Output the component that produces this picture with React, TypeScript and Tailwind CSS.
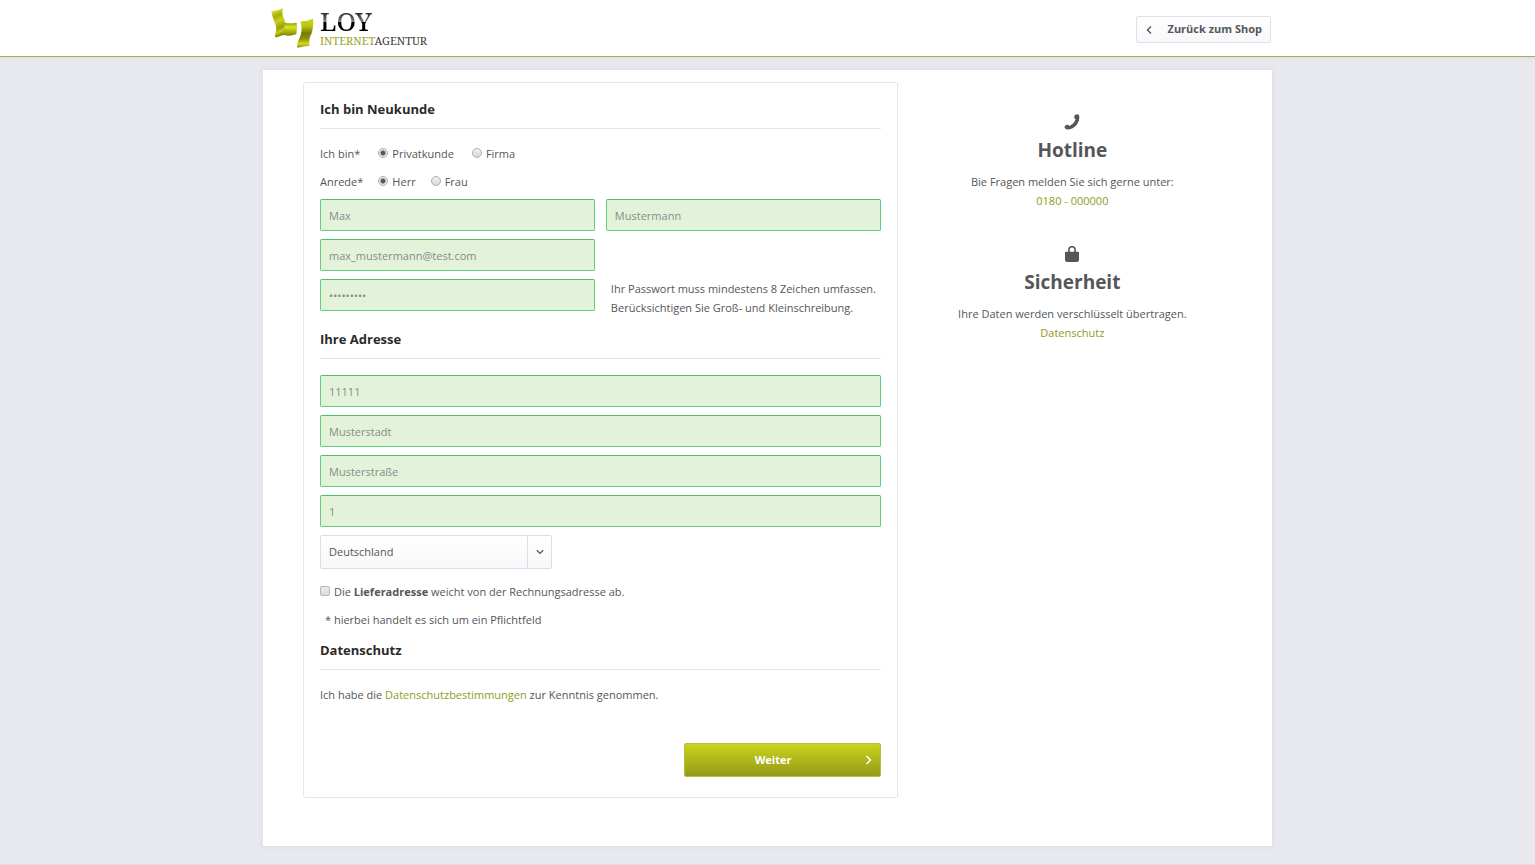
import React, { useState } from "react";

const addressFields = [
    { id: "zip", label: "PLZ", value: "11111" },
    { id: "city", label: "Ort", value: "Musterstadt" },
    { id: "street", label: "Straße", value: "Musterstraße" },
    { id: "number", label: "Hausnummer", value: "1" },
];

function Logo() {
    return (
        <a href="#" className="flex items-start gap-1">
            <svg viewBox="48 20 135 128" className="h-[42px] w-[45px] shrink-0" aria-hidden="true">
                <defs>
                    <linearGradient id="ribbon" x1="0" y1="0" x2="0.25" y2="1">
                        <stop offset="0" stopColor="#7f8500" />
                        <stop offset="0.14" stopColor="#d3de1c" />
                        <stop offset="0.32" stopColor="#a6ac08" />
                        <stop offset="0.5" stopColor="#c9d316" />
                        <stop offset="0.75" stopColor="#9ca204" />
                        <stop offset="0.88" stopColor="#c6cf1d" />
                        <stop offset="1" stopColor="#7e8400" />
                    </linearGradient>
                    <linearGradient id="fold" x1="0" y1="0" x2="0" y2="1">
                        <stop offset="0" stopColor="#8d9300" />
                        <stop offset="0.35" stopColor="#dbe62a" />
                        <stop offset="0.75" stopColor="#a2a908" />
                        <stop offset="1" stopColor="#7e8400" />
                    </linearGradient>
                    <linearGradient id="tail" x1="0" y1="0" x2="0" y2="1">
                        <stop offset="0" stopColor="#c9d420" />
                        <stop offset="0.25" stopColor="#bcc60f" />
                        <stop offset="0.5" stopColor="#767b00" />
                        <stop offset="0.7" stopColor="#8f9500" />
                        <stop offset="0.87" stopColor="#d3de25" />
                        <stop offset="1" stopColor="#7a8000" />
                    </linearGradient>
                </defs>
                <path d="M48 34Q66 32 84 24Q78 36 83 48Q90 58 89 70L97 105Q80 104 63 113Q55 110 61 98Q66 82 57 64Q50 48 48 34Z" fill="url(#ribbon)" />
                <path d="M87 67Q106 72 125 68Q128 85 124 103Q109 109 92 107L78 99Q91 90 87 67Z" fill="url(#fold)" />
                <path d="M137 64Q158 64 175 56Q178 75 171 99Q161 116 164 138Q145 139 128 144Q124 134 131 121Q139 106 140 92Q141 76 137 64Z" fill="url(#tail)" />
            </svg>
            <span className="flex flex-col font-['Noto_Serif','Liberation_Serif',serif]">
                <span className="bg-linear-to-b from-[#333] from-25% via-[#8a8a8a] via-54% to-black to-55% bg-clip-text text-[26px] leading-7 font-medium text-transparent">
                    LOY
                </span>
                <span className="text-[11px] leading-3 text-[#3a3a3a]">
                    <span className="text-[#9ba41c]">INTERNET</span>AGENTUR
                </span>
            </span>
        </a>
    );
}

function SectionTitle({ children }: { children: React.ReactNode }) {
    return (
        <h2 className="border-b border-[#e4e4ee] pb-[9px] text-[13px] leading-5 font-bold text-[#2b2b2b]">
            {children}
        </h2>
    );
}

function Field({ id, label, value, type = "text" }: { id: string; label: string; value: string; type?: string }) {
    return (
        <div>
            <input
                id={id}
                type={type}
                aria-label={label}
                defaultValue={value}
                className="block h-8 w-full rounded-xs border border-[#62cb80] border-t-[#50be70] bg-[#e2f3da] px-2 leading-5 text-[#8a8a8a] outline-none"
            />
        </div>
    );
}

function Radio({ name, label, checked, onChange }: { name: string; label: string; checked: boolean; onChange: () => void }) {
    return (
        <label className="flex items-center gap-1">
            <input
                type="radio"
                name={name}
                checked={checked}
                onChange={onChange}
                className="mb-[2px] size-[10px] appearance-none rounded-full border border-[#b0b0b0] bg-linear-to-b from-[#f2f2f2] to-[#d8d8d8] checked:bg-[radial-gradient(circle,#585858_0_2px,#e6e6e6_3px)]"
            />
            {label}
        </label>
    );
}

function InfoBlock({ icon, title, text, link }: { icon: React.ReactNode; title: string; text: string; link: string }) {
    return (
        <div className="flex flex-col items-center text-center">
            {icon}
            <h3 className="mt-[6px] text-[19px] leading-7 font-bold">{title}</h3>
            <p className="mt-2 leading-[19px]">
                {text}
                <br />
                <a href="#" className="text-[#8f9c20]">{link}</a>
            </p>
        </div>
    );
}

function App() {
    const [customerType, setCustomerType] = useState("Privatkunde");
    const [salutation, setSalutation] = useState("Herr");

    return (
        <div className="min-h-screen border-b border-[#dedee4] bg-[#e8e9ee] font-['Open_Sans',sans-serif] text-[11px] text-[#55555a]">
            <header className="border-b border-[#aab04a] bg-white shadow-xs">
                <div className="mx-auto flex h-14 max-w-[1009px] items-center justify-between pr-px pl-2">
                    <Logo />
                    <a
                        href="#"
                        className="mt-[2px] flex h-[27px] items-center gap-[15px] rounded-xs border border-[#e0e0ec] bg-linear-to-b from-white to-[#f8f8fa] px-2 pt-px font-bold"
                    >
                        <svg viewBox="0 0 8 10" className="h-[10px] w-2" fill="none" stroke="currentColor" strokeWidth="1.4" aria-hidden="true">
                            <path d="M6 1.5L2.5 5L6 8.5" />
                        </svg>
                        Zurück zum Shop
                    </a>
                </div>
            </header>

            <main className="mx-auto mt-[13px] flex max-w-[1009px] items-start bg-white pt-3 pr-[25px] pb-12 pl-10 shadow-[0_0_4px_1px_#dcdce8]">
                <form
                    onSubmit={(e) => e.preventDefault()}
                    className="w-[63%] rounded-xs border border-[#e6e6ee] px-4 pt-4 pb-5"
                >
                    <SectionTitle>Ich bin Neukunde</SectionTitle>
                    <div className="mt-[11px] flex h-7 items-center gap-[18px]">
                        <span>Ich bin*</span>
                        {["Privatkunde", "Firma"].map((type) => (
                            <Radio
                                key={type}
                                name="customerType"
                                label={type}
                                checked={customerType === type}
                                onChange={() => setCustomerType(type)}
                            />
                        ))}
                    </div>
                    <div className="flex h-7 items-center gap-[15px]">
                        <span>Anrede*</span>
                        {["Herr", "Frau"].map((item) => (
                            <Radio
                                key={item}
                                name="salutation"
                                label={item}
                                checked={salutation === item}
                                onChange={() => setSalutation(item)}
                            />
                        ))}
                    </div>
                    <div className="mt-[3px] mb-3 grid grid-cols-2 gap-x-[11px] gap-y-2">
                        <Field id="firstname" label="Vorname" value="Max" />
                        <Field id="lastname" label="Nachname" value="Mustermann" />
                        <Field id="email" label="E-Mail" type="email" value="max_mustermann@test.com" />
                        <span />
                        <Field id="password" label="Passwort" type="password" value="passwort1" />
                        <p className="pl-[5px] leading-[19px] whitespace-nowrap">
                            Ihr Passwort muss mindestens 8 Zeichen umfassen.
                            <br />
                            Berücksichtigen Sie Groß- und Kleinschreibung.
                        </p>
                    </div>

                    <SectionTitle>Ihre Adresse</SectionTitle>
                    <div className="mt-4 flex flex-col gap-2">
                        {addressFields.map((field) => (
                            <Field key={field.id} {...field} />
                        ))}
                        <div className="relative w-[232px]">
                            <select
                                id="country"
                                aria-label="Land"
                                className="block h-[34px] w-full appearance-none rounded-xs border border-[#dedeea] bg-linear-to-b from-white to-[#f8f8fa] px-2 leading-5"
                            >
                                <option>Deutschland</option>
                            </select>
                            <span className="pointer-events-none absolute inset-y-0 right-0 flex w-[25px] items-center justify-center border-l border-[#dedeea]">
                                <svg viewBox="0 0 8 6" className="h-[6px] w-2" fill="none" stroke="currentColor" strokeWidth="1.3" aria-hidden="true">
                                    <path d="M0.8 1.2L4 4.4L7.2 1.2" />
                                </svg>
                            </span>
                        </div>
                    </div>
                    <label className="mt-[9px] flex h-7 items-center gap-1">
                        <input
                            type="checkbox"
                            className="mb-[2px] size-[10px] appearance-none rounded-xs border border-[#b8b8b8] bg-linear-to-b from-[#ececec] to-[#dcdcdc] checked:bg-[#8f9c20]"
                        />
                        <span>
                            Die <b>Lieferadresse</b> weicht von der Rechnungsadresse ab.
                        </span>
                    </label>
                    <p className="mb-[6px] pl-[5px] leading-7">* hierbei handelt es sich um ein Pflichtfeld</p>

                    <SectionTitle>Datenschutz</SectionTitle>
                    <p className="mt-[15px] leading-[19px]">
                        Ich habe die <a href="#" className="text-[#8f9c20]">Datenschutzbestimmungen</a> zur Kenntnis genommen.
                    </p>
                    <button
                        type="submit"
                        className="mt-[39px] ml-auto flex h-[34px] w-[35%] items-center gap-1 rounded-xs border border-[#b8bd3c] bg-linear-to-b from-[#c9d41c] to-[#959a18] pr-2 font-bold text-white"
                    >
                        <span className="flex-1">Weiter</span>
                        <svg viewBox="0 0 7 10" className="h-[10px] w-[7px]" fill="none" stroke="currentColor" strokeWidth="1.5" aria-hidden="true">
                            <path d="M1.5 1L5.5 5L1.5 9" />
                        </svg>
                    </button>
                </form>

                <aside className="flex flex-1 flex-col gap-9 pt-8">
                    <InfoBlock
                        icon={
                            <svg viewBox="0 0 16 16" className="size-4" fill="currentColor" aria-hidden="true">
                                <path d="M11.2 0.9Q13 -0.3 15 1.1Q16.2 6 13 10.4Q9 15.3 3.3 15.5Q1 15.3 0.5 13.2Q0.5 11.8 2.2 11Q4 10.3 5.4 12Q9.5 10.2 11.7 5.3Q9.8 4.6 10.2 2.6Q10.4 1.5 11.2 0.9Z" />
                            </svg>
                        }
                        title="Hotline"
                        text="Bie Fragen melden Sie sich gerne unter:"
                        link="0180 - 000000"
                    />
                    <InfoBlock
                        icon={
                            <svg viewBox="0 0 16 16" className="size-4" fill="currentColor" aria-hidden="true">
                                <path d="M1 6.5Q1 5.7 1.8 5.7H14.2Q15 5.7 15 6.5V14Q15 16 13 16H3Q1 16 1 14Z" />
                                <path d="M4.9 7V4Q4.9 0.8 8 0.8Q11.1 0.8 11.1 4V7" fill="none" stroke="currentColor" strokeWidth="1.6" />
                            </svg>
                        }
                        title="Sicherheit"
                        text="Ihre Daten werden verschlüsselt übertragen."
                        link="Datenschutz"
                    />
                </aside>
            </main>
        </div>
    );
}

export default App;
